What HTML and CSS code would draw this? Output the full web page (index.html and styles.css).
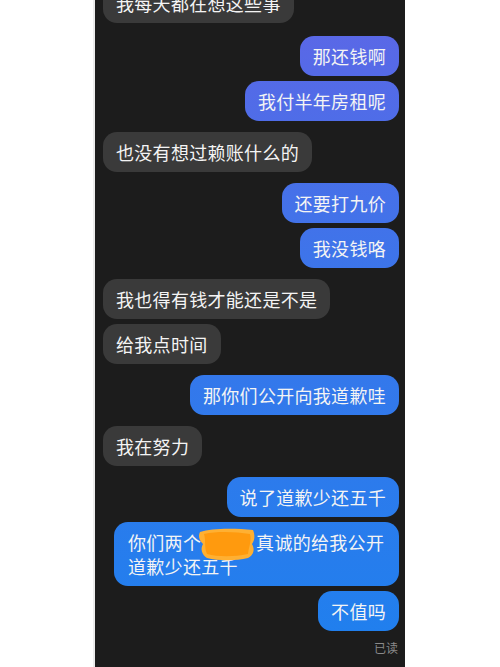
FILE: index.html
```html
<!DOCTYPE html>
<html lang="zh-CN">
<head>
<meta charset="utf-8">
<title>聊天记录</title>
<link rel="stylesheet" href="styles.css">
</head>
<body>
<div class="phone">
  <div class="chat">
    <div class="msg in first">我每天都在想这些事</div>
    <div class="msg out gap-top">那还钱啊</div>
    <div class="msg out gap-s">我付半年房租呢</div>
    <div class="msg in gap-l">也没有想过赖账什么的</div>
    <div class="msg out gap-l">还要打九价</div>
    <div class="msg out gap-s">我没钱咯</div>
    <div class="msg in gap-l">我也得有钱才能还是不是</div>
    <div class="msg in gap-s">给我点时间</div>
    <div class="msg out gap-l">那你们公开向我道歉哇</div>
    <div class="msg in gap-l">我在努力</div>
    <div class="msg out gap-l">说了道歉少还五千</div>
    <div class="msg out gap-s wide">你们两个<span class="redact"><span class="hidden">某某某</span><svg class="blob" viewBox="0 0 58 34" width="58" height="34"><path d="M2 5 C14 1 36 1 55 3 C57 8 57 13 54 17 C57 22 56 28 50 31 C38 34 20 34 9 31 C4 28 2 22 5 17 C1 13 0 9 2 5 Z" fill="#ffb032"/><path d="M6 7 C20 4 38 5 52 7 C54 13 51 19 50 27 C36 30 20 30 9 27 C6 20 8 13 6 7 Z" fill="#ff9a0e"/></svg></span>真诚的给我公开道歉少还五千</div>
    <div class="msg out gap-s">不值吗</div>
    <div class="read">已读</div>
  </div>
</div>
</body>
</html>
```

FILE: styles.css
```css
html, body {
  margin: 0;
  padding: 0;
  background: #ffffff;
}

body {
  font-family: "Noto Sans CJK SC", "Noto Sans", sans-serif;
  width: 500px;
  height: 667px;
  overflow: hidden;
}

.phone {
  width: 310px;
  height: 667px;
  margin-left: 95px;
  background: #1c1c1c;
  overflow: hidden;
  box-shadow: -2px 0 0 #ececec;
}

.chat {
  display: flex;
  flex-direction: column;
  padding: 0 6px 0 8px;
}

.msg {
  font-size: 18px;
  line-height: 24px;
  letter-spacing: 0.3px;
  color: #f4f4f4;
  padding: 8px 13px;
  border-radius: 14px;
  max-width: 258px;
  box-sizing: content-box;
}

.msg.in {
  align-self: flex-start;
  background: #3a3a3a;
}

.msg.out {
  align-self: flex-end;
  background: linear-gradient(180deg, #5e66e6 0px, #3c75ea 270px, #1e80ee 667px);
  background-attachment: fixed;
}

.msg.first {
  margin-top: -17px;
}

.msg.wide {
  padding-left: 14px;
  max-width: 258px;
}

.gap-top {
  margin-top: 13px;
}

.gap-s {
  margin-top: 5px;
}

.gap-l {
  margin-top: 11px;
}

.redact {
  position: relative;
  display: inline-block;
}

.hidden {
  color: transparent;
}

.blob {
  position: absolute;
  left: -3px;
  top: -3px;
}

.read {
  align-self: flex-end;
  margin-top: 9px;
  margin-right: 1px;
  font-size: 12px;
  line-height: 16px;
  color: #8a8a8a;
}
```
